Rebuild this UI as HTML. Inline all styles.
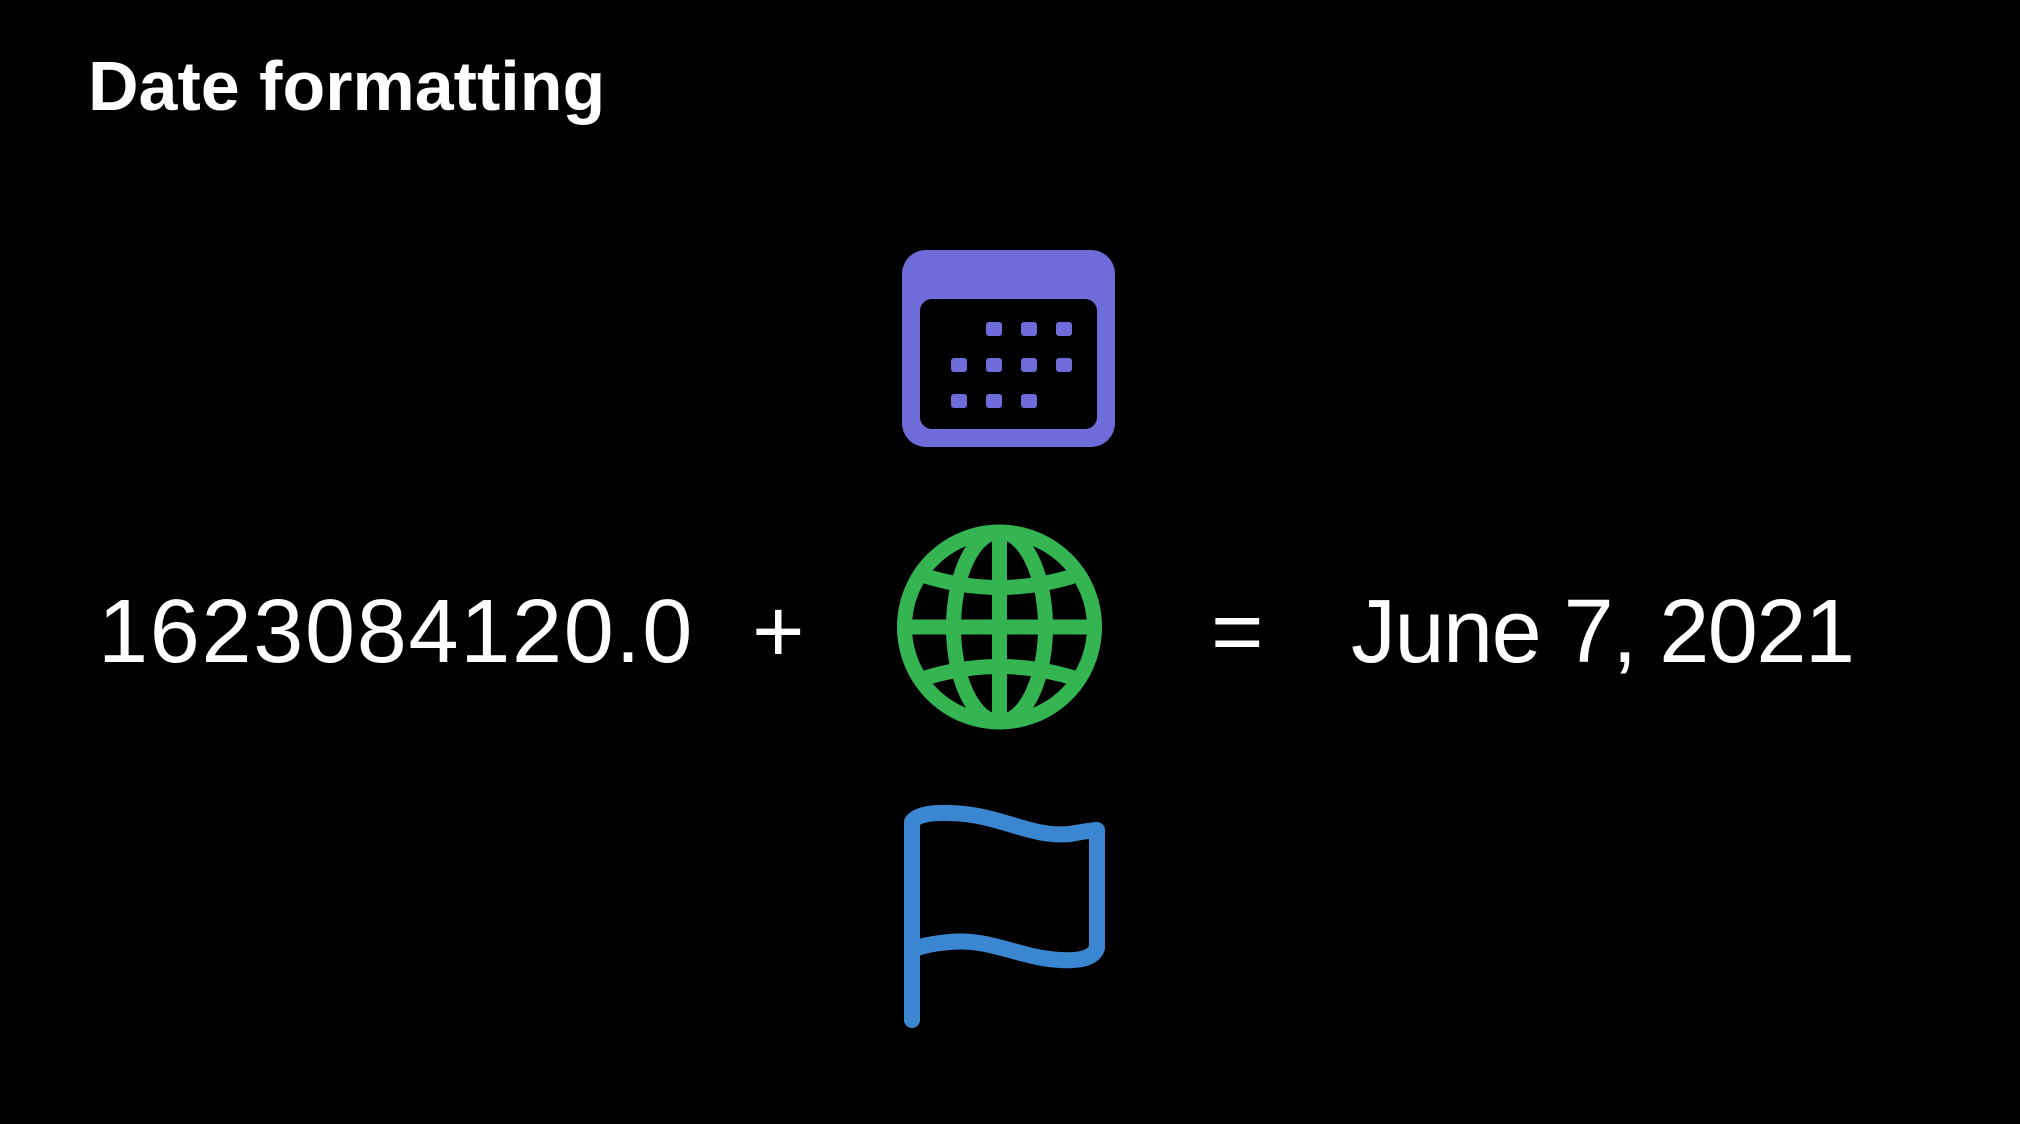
<!DOCTYPE html>
<html><head><meta charset="utf-8"><style>
html,body{margin:0;padding:0;background:#000;width:2020px;height:1124px;overflow:hidden;position:relative;font-family:"Liberation Sans",sans-serif;color:#fff}
.t{position:absolute;white-space:nowrap}
</style></head><body>
<div class="t" style="left:88px;top:46px;font-size:70px;font-weight:bold;letter-spacing:0px">Date formatting</div>
<div class="t" style="left:98px;top:581px;font-size:90px;letter-spacing:1.7px">1623084120.0</div>
<div class="t" style="left:752px;top:581px;font-size:90px">+</div>
<div class="t" style="left:1211px;top:581px;font-size:90px">=</div>
<div class="t" style="left:1351px;top:581px;font-size:90px;letter-spacing:-1.5px">June 7, 2021</div>
<svg style="position:absolute;left:0;top:0" width="2020" height="1124">
<g transform="translate(902,250)">
<rect x="0" y="0" width="213" height="197" rx="24" fill="#6e6cd8"/>
<rect x="18" y="49" width="177" height="130" rx="12" fill="#000"/>
<g fill="#6e6cd8">
<rect x="84" y="72" width="16" height="14" rx="3"/><rect x="119" y="72" width="16" height="14" rx="3"/><rect x="154" y="72" width="16" height="14" rx="3"/>
<rect x="49" y="108" width="16" height="14" rx="3"/><rect x="84" y="108" width="16" height="14" rx="3"/><rect x="119" y="108" width="16" height="14" rx="3"/><rect x="154" y="108" width="16" height="14" rx="3"/>
<rect x="49" y="144" width="16" height="14" rx="3"/><rect x="84" y="144" width="16" height="14" rx="3"/><rect x="119" y="144" width="16" height="14" rx="3"/>
</g></g>
<g fill="none" stroke="#34b551" stroke-width="15">
<circle cx="999.5" cy="627" r="95"/>
<ellipse cx="999.5" cy="627" rx="46" ry="95"/>
<line x1="999.5" y1="532" x2="999.5" y2="722"/>
<line x1="904" y1="627" x2="1095" y2="627"/>
<path d="M922 575 Q999.5 600 1077 575"/>
<path d="M922 679 Q999.5 654 1077 679"/>
</g>
<g fill="none" stroke="#3a86d0" stroke-width="16" stroke-linecap="round" stroke-linejoin="round">
<path d="M912 1020 V822 Q918 812 950 813 C1000 814 1030 838 1070 834 Q1092 830 1097 830 V948 Q1092 962 1060 960 C1020 958 990 938 950 942 Q925 944 912 950"/>
</g>
</svg>
</body></html>
